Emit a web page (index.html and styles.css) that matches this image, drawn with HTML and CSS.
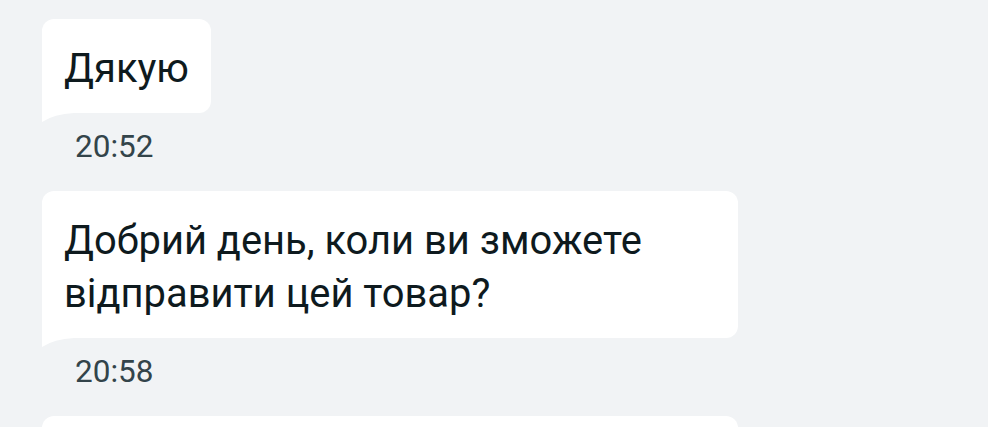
FILE: index.html
```html
<!DOCTYPE html>
<html lang="uk">

<head>
    <meta charset="UTF-8">
    <title>Чат</title>
    <link rel="stylesheet" href="styles.css">
</head>

<body>
    <div id="chat">
        <div class="msg">
            <div class="bubble">Дякую</div>
            <div class="time">20:52</div>
        </div>
        <div class="msg">
            <div class="bubble">Добрий день, коли ви зможете відправити цей товар?</div>
            <div class="time">20:58</div>
        </div>
        <!-- наступне повідомлення, видно лише верх -->
        <div class="msg">
            <div class="bubble wide"></div>
        </div>
    </div>
</body>

</html>
```

FILE: styles.css
```css
body {
    margin: 0;
    background-color: #f1f3f5;
    font-family: Roboto, "Noto Sans", sans-serif;
    overflow: hidden;
}

#chat {
    display: flex;
    flex-direction: column;
    align-items: flex-start;
    padding: 19px 0 0 42px;
}

.msg {
    display: flex;
    flex-direction: column;
    align-items: flex-start;
    margin-bottom: 23px;
}

.bubble {
    position: relative;
    box-sizing: border-box;
    max-width: 696px;
    background: #fff;
    color: #0e1a1e;
    font-size: 39.9px;
    line-height: 53px;
    padding: 23px 22px 18px 22px;
    border-radius: 12px 12px 12px 0;
}

.bubble.wide {
    width: 696px;
    min-height: 94px;
}

/* хвостик внизу зліва */
.bubble::after {
    content: "";
    position: absolute;
    left: 0;
    top: 100%;
    width: 32px;
    height: 9px;
    background: #fff;
    clip-path: path('M0 0 H32 Q12 1 0 9 Z');
}

.time {
    margin: 13px 0 0 33px;
    font-size: 31.5px;
    line-height: 42px;
    color: #33444a;
}
```
